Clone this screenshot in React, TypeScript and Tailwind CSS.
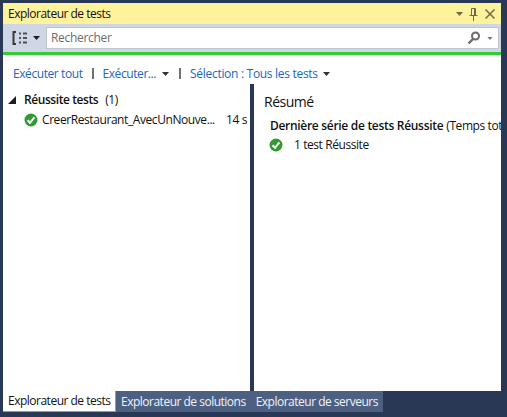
const font = { fontFamily: '"Open Sans", "Noto Sans", sans-serif' };

function Check({ className }: { className: string }) {
  return (
    <svg viewBox="0 0 14 14" className={className}>
      <circle cx="7" cy="7" r="6.5" fill="#339933" />
      <path d="M3.6 7.2 L6 9.8 L10.4 4.4" fill="none" stroke="#fff" strokeWidth="2" />
    </svg>
  );
}

function Caret({ className }: { className: string }) {
  return (
    <svg viewBox="0 0 7 4" className={className}>
      <path d="M0 0H7L3.5 4Z" fill="currentColor" />
    </svg>
  );
}

function Tab({ label }: { label: string }) {
  return (
    <div className="h-[21px] pl-[5px] pr-[5px] flex items-center bg-[#4d6082] text-[#f0f3f8] text-[12px] tracking-[-0.5px] whitespace-nowrap">
      {label}
    </div>
  );
}

export default function App() {
  return (
    <div style={font} className="w-[507px] h-[417px] bg-[#293955] pt-[3px] pl-[3px] pr-[6px] flex flex-col text-[12px] text-[#111] overflow-hidden">
      <div className="h-[21px] bg-[#fff29d] flex items-center pl-[5px] pr-[6px] shrink-0">
        <span className="tracking-[-0.5px] text-[#111]">Explorateur de tests</span>
        <div className="ml-auto flex items-center gap-[6px] text-[#6f6a45]">
          <Caret className="w-[7px] h-[4px]" />
          <svg viewBox="0 0 9 14" className="w-[9px] h-[14px]" fill="none" stroke="currentColor" strokeWidth="1">
            <path d="M2.5 1.5H6.5V8.5H2.5ZM5.5 2V8M0.5 8.5H8.5M4.5 9V14" />
          </svg>
          <svg viewBox="0 0 10 10" className="w-[10px] h-[10px] ml-[1px]" fill="none" stroke="currentColor" strokeWidth="1.5">
            <path d="M0.5 0.5L9.5 9.5M9.5 0.5L0.5 9.5" />
          </svg>
        </div>
      </div>
      <div className="h-[28px] bg-[#cfd6e5] flex items-center pl-[9px] shrink-0">
        <svg viewBox="0 0 16 14" className="w-[16px] h-[14px] text-[#3a3a3a]" fill="none" stroke="currentColor">
          <path d="M4 1H1.5V13H4" strokeWidth="2" />
          <path d="M7 2.5H9M11 2.5H15M7 7H9M11 7H15M7 11.5H9M11 11.5H15" strokeWidth="2" strokeOpacity="0.85" />
        </svg>
        <Caret className="w-[7px] h-[4px] ml-[5px] text-[#1e1e1e]" />
        <div className="ml-[6px] mr-[2px] flex-1 h-[22px] bg-white border border-[#c0c4cc] flex items-center pl-[4px] pr-[4px]">
          <span className="text-[#6d6d6d] tracking-[-0.3px]">Rechercher</span>
          <svg viewBox="0 0 14 14" className="ml-auto w-[14px] h-[14px] text-[#6a6a6a]" fill="none" stroke="currentColor">
            <circle cx="8.5" cy="5" r="3.5" strokeWidth="2" />
            <path d="M6 8L1.5 12.5" strokeWidth="2.4" />
          </svg>
          <Caret className="w-[6px] h-[3px] ml-[6px] mr-[1px] text-[#777]" />
        </div>
      </div>
      <div className="h-[3px] bg-[#33cc33] shrink-0" />
      <div className="flex-1 bg-white flex flex-col min-h-0">
        <div className="h-[29px] pt-[8px] flex items-center pl-[10px] text-[#1a66c4] shrink-0 tracking-[-0.42px] whitespace-nowrap">
          <span>Exécuter tout</span>
          <div className="w-[2px] h-[11px] bg-[#717171] mx-[9px]" />
          <span>Exécuter...</span>
          <Caret className="w-[7px] h-[4px] ml-[6px] text-[#333]" />
          <div className="w-[2px] h-[11px] bg-[#717171] ml-[10px] mr-[9px]" />
          <span className="tracking-[-0.3px]">Sélection : Tous les tests</span>
          <Caret className="w-[7px] h-[4px] ml-[5px] text-[#333]" />
        </div>
        <div className="flex-1 flex min-h-0">
          <div className="w-[247px] shrink-0 pt-[6px] whitespace-nowrap tracking-[-0.42px]">
            <div className="h-[20px] flex items-center pl-[5px]">
              <svg viewBox="0 0 8 8" className="w-[8px] h-[8px]"><path d="M8 0V8H0Z" fill="#1e1e1e" /></svg>
              <b className="ml-[8px] font-semibold">Réussite tests</b>
              <span className="ml-[7px]">(1)</span>
            </div>
            <div className="h-[20px] flex items-center pl-[21px] pr-[3px]">
              <Check className="w-[14px] h-[14px] shrink-0" />
              <span className="ml-[4px]">CreerRestaurant_AvecUnNouve...</span>
              <span className="ml-auto">14 s</span>
            </div>
          </div>
          <div className="w-[4px] bg-[#293955] shrink-0" />
          <div className="flex-1 min-w-0 overflow-hidden pl-[10px] pt-[8px] whitespace-nowrap tracking-[-0.42px]">
            <div className="text-[14px] h-[20px] leading-[20px] font-medium tracking-[-0.5px]">Résumé</div>
            <div className="mt-[5px] ml-[6px] h-[18px] flex items-center">
              <b className="font-semibold tracking-[-0.3px]">Dernière série de tests Réussite</b>
              <span className="ml-[3px]">(Temps total)</span>
            </div>
            <div className="ml-[5px] h-[20px] flex items-center">
              <Check className="w-[14px] h-[14px] shrink-0" />
              <span className="ml-[11px]">1 test Réussite</span>
            </div>
          </div>
        </div>
      </div>
      <div className="h-[26px] flex items-start shrink-0">
        <div className="h-[21px] w-[113px] px-[5px] flex items-center bg-white text-[#111] border-b-[1px] border-r-[1px] border-[#8e9bb5] tracking-[-0.5px] whitespace-nowrap">Explorateur de tests</div>
        <Tab label="Explorateur de solutions" />
        <Tab label="Explorateur de serveurs" />
      </div>
    </div>
  );
}
